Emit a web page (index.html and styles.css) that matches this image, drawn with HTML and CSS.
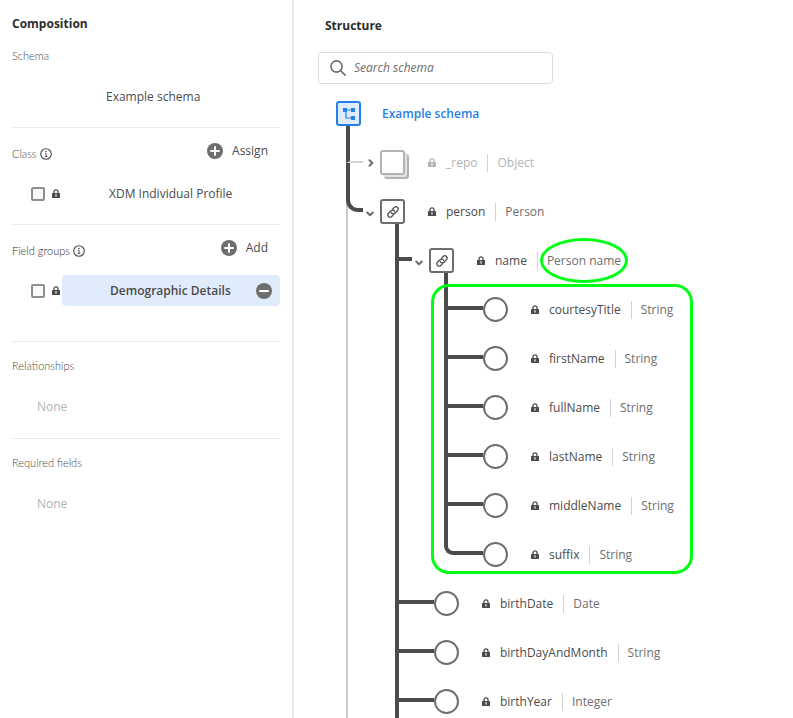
FILE: index.html
```html
<!DOCTYPE html>
<html lang="en">
<head>
<meta charset="utf-8">
<title>Example schema</title>
<link rel="stylesheet" href="styles.css">
</head>
<body>
<svg class="sprite" aria-hidden="true">
  <symbol id="lock" viewBox="0 0 8 9">
    <path d="M2 4.500V2.800a2 2 0 0 1 4 0v1.700" fill="none" stroke="currentColor" stroke-width="1.300"/>
    <path fill-rule="evenodd" fill="currentColor" d="M.6 4h6.800a.6.6 0 0 1 .6.6v3.800a.6.6 0 0 1-.6.6H.6a.6.6 0 0 1-.6-.6V4.600a.6.6 0 0 1 .6-.6zM4 5.200a.8.8 0 0 0-.4 1.500v1h.8v-1A.8.8 0 0 0 4 5.200z"/>
  </symbol>
  <symbol id="info" viewBox="0 0 12 12">
    <circle cx="6" cy="6" r="5.300" fill="none" stroke="currentColor" stroke-width="1.100"/>
    <circle cx="6" cy="3.600" r=".8" fill="currentColor"/>
    <path d="M4.900 5.500h1.200V8.500M4.700 8.500h2.700" fill="none" stroke="currentColor" stroke-width=".9"/>
  </symbol>
  <symbol id="plus" viewBox="0 0 16 16">
    <circle cx="8" cy="8" r="8" fill="currentColor"/>
    <path d="M8 4v8M4 8h8" stroke="#fff" stroke-width="2" stroke-linecap="round"/>
  </symbol>
  <symbol id="minus" viewBox="0 0 16 16">
    <circle cx="8" cy="8" r="8" fill="currentColor"/>
    <path d="M4 8h8" stroke="#fff" stroke-width="2" stroke-linecap="round"/>
  </symbol>
  <symbol id="link" viewBox="0 0 14 14">
    <g transform="rotate(-45 7 7)" fill="none" stroke="currentColor" stroke-width="1.200" stroke-linecap="round">
      <path d="M5.500 9.300H3a2.300 2.300 0 0 1 0-4.600h3.500a2.300 2.300 0 0 1 2.100 3.200"/>
      <path d="M8.500 4.700H11a2.300 2.300 0 0 1 0 4.600H7.500a2.300 2.300 0 0 1-2.100-3.200"/>
    </g>
  </symbol>
  <symbol id="chevron" viewBox="0 0 8 8">
    <path d="M1.200 2.500 4 5.300l2.800-2.800" fill="none" stroke="currentColor" stroke-width="2" stroke-linecap="round" stroke-linejoin="round"/>
  </symbol>
</svg>
<div class="app">
  <aside class="composition">
    <h2>Composition</h2>
    <section class="first">
      <h3>Schema</h3>
      <p class="schema-name">Example schema</p>
    </section>
    <section>
      <header>
        <h3>Class <svg class="info"><use href="#info"/></svg></h3>
        <button type="button" class="action"><svg class="disc"><use href="#plus"/></svg>Assign</button>
      </header>
      <div class="item">
        <input type="checkbox" id="class-profile">
        <svg class="lock"><use href="#lock"/></svg>
        <label for="class-profile" class="name">XDM Individual Profile</label>
      </div>
    </section>
    <section class="groups">
      <header>
        <h3 class="strong">Field groups <svg class="info"><use href="#info"/></svg></h3>
        <button type="button" class="action"><svg class="disc"><use href="#plus"/></svg>Add</button>
      </header>
      <div class="item">
        <input type="checkbox" id="group-demo">
        <svg class="lock"><use href="#lock"/></svg>
        <div class="name selected">
          <label for="group-demo">Demographic Details</label>
          <button type="button" class="remove" aria-label="Remove"><svg class="disc"><use href="#minus"/></svg></button>
        </div>
      </div>
    </section>
    <section class="plain">
      <h3>Relationships</h3>
      <p class="none">None</p>
    </section>
    <section class="plain">
      <h3>Required fields</h3>
      <p class="none">None</p>
    </section>
  </aside>
  <main class="structure">
    <h2>Structure</h2>
    <div class="search">
      <svg viewBox="0 0 16 16"><g fill="none" stroke="currentColor" stroke-width="1.600" stroke-linecap="round"><circle cx="6.500" cy="6.500" r="5.600"/><path d="m10.700 10.700 4.400 4.400"/></g></svg>
      <input type="search" placeholder="Search schema" aria-label="Search schema">
    </div>
    <div class="tree">
      <div class="row root">
        <span class="box"><svg viewBox="0 0 14 14"><g fill="currentColor"><rect x="1" y="1" width="4" height="4"/><rect x="9" y="1" width="4" height="4"/><rect x="9" y="9" width="4" height="4"/></g><path d="M3 3h7M4 3v8h6" fill="none" stroke="currentColor" stroke-width="1.200"/></svg></span>
        <a href="#schema">Example schema</a>
      </div>
      <ul class="top">
        <li class="object muted">
          <div class="rail"><i class="elbow"></i></div>
          <div class="twisty closed"><svg><use href="#chevron"/></svg></div>
          <div class="node"><div class="row"><span class="stack"></span><svg class="lock"><use href="#lock"/></svg><span class="field">_repo</span><span class="type">Object</span></div></div>
        </li>
        <li class="object open">
          <div class="rail"><i class="elbow"></i></div>
          <div class="twisty"><svg><use href="#chevron"/></svg></div>
          <div class="node">
            <div class="row"><span class="box"><svg><use href="#link"/></svg></span><svg class="lock"><use href="#lock"/></svg><span class="field">person</span><span class="type">Person</span></div>
            <ul>
              <li class="object">
                <div class="rail"><i class="elbow"></i></div>
                <div class="twisty"><svg><use href="#chevron"/></svg></div>
                <div class="node">
                  <div class="row"><span class="box"><svg><use href="#link"/></svg></span><svg class="lock"><use href="#lock"/></svg><span class="field">name</span><span class="type"><span class="ringed">Person name</span></span></div>
                  <ul class="framed">
                    <li><div class="rail"><i class="elbow"></i></div><div class="row"><span class="dot"></span><svg class="lock"><use href="#lock"/></svg><span class="field">courtesyTitle</span><span class="type">String</span></div></li>
                    <li><div class="rail"><i class="elbow"></i></div><div class="row"><span class="dot"></span><svg class="lock"><use href="#lock"/></svg><span class="field">firstName</span><span class="type">String</span></div></li>
                    <li><div class="rail"><i class="elbow"></i></div><div class="row"><span class="dot"></span><svg class="lock"><use href="#lock"/></svg><span class="field">fullName</span><span class="type">String</span></div></li>
                    <li><div class="rail"><i class="elbow"></i></div><div class="row"><span class="dot"></span><svg class="lock"><use href="#lock"/></svg><span class="field">lastName</span><span class="type">String</span></div></li>
                    <li><div class="rail"><i class="elbow"></i></div><div class="row"><span class="dot"></span><svg class="lock"><use href="#lock"/></svg><span class="field">middleName</span><span class="type">String</span></div></li>
                    <li class="last"><div class="rail"><i class="elbow"></i></div><div class="row"><span class="dot"></span><svg class="lock"><use href="#lock"/></svg><span class="field">suffix</span><span class="type">String</span></div></li>
                  </ul>
                </div>
              </li>
              <li><div class="rail"><i class="elbow"></i></div><div class="row"><span class="dot"></span><svg class="lock"><use href="#lock"/></svg><span class="field">birthDate</span><span class="type">Date</span></div></li>
              <li><div class="rail"><i class="elbow"></i></div><div class="row"><span class="dot"></span><svg class="lock"><use href="#lock"/></svg><span class="field">birthDayAndMonth</span><span class="type">String</span></div></li>
              <li><div class="rail"><i class="elbow"></i></div><div class="row"><span class="dot"></span><svg class="lock"><use href="#lock"/></svg><span class="field">birthYear</span><span class="type">Integer</span></div></li>
            </ul>
          </div>
        </li>
      </ul>
    </div>
  </main>
</div>
</body>
</html>
```
FILE: styles.css
```css
:root {
  --ink: #4b4b4b;
  --mid: #6e6e6e;
  --line: #eaeaea;
  --blue: #2680eb;
  --mark: #00ff14;
}

*, *::before, *::after { box-sizing: border-box; }

body {
  margin: 0;
  font: 12px/16px "Open Sans", "Noto Sans", sans-serif;
  color: var(--ink);
  background: #fff;
}

h2, h3, p, ul { margin: 0; padding: 0; }
ul { list-style: none; }
svg { display: block; flex: none; }
button, input { font: inherit; color: inherit; }
button { border: 0; padding: 0; background: none; }

.sprite { position: absolute; width: 0; height: 0; }

.app {
  display: grid;
  grid-template-columns: 294px 1fr;
  height: 100vh;
  overflow: hidden;
}

h2 {
  font-size: 12px;
  line-height: 16px;
  font-weight: 700;
  color: #2c2c2c;
}

/* Composition panel */
.composition {
  padding: 16px 12px;
  border-right: 2px solid var(--line);
}

.composition section {
  height: 97px;
  padding-top: 11px;
  border-top: 1px solid var(--line);
}

.composition .first {
  height: 95px;
  padding-top: 16px;
  border: 0;
}

.composition .groups { height: 117px; }
.composition .plain { padding-top: 16px; }

h3 {
  display: flex;
  align-items: center;
  gap: 3px;
  font: 300 11px/16px Lato, sans-serif;
  color: var(--ink);
}

h3.strong { color: #2c2c2c; }

.info { width: 12px; height: 12px; color: var(--ink); }

header {
  display: flex;
  justify-content: space-between;
  padding-right: 12px;
}

header h3 { padding-top: 6px; }

.action {
  display: flex;
  align-items: center;
  gap: 9px;
  height: 24px;
}

.disc { width: 16px; height: 16px; color: var(--mid); }

.schema-name { padding: 25px 0 0 94px; }

.item {
  display: flex;
  align-items: center;
  padding: 15px 0 0 19px;
}

.item input {
  appearance: none;
  width: 14px;
  height: 14px;
  margin: 0 7px 0 0;
  border: 2px solid #8e8e8e;
  border-radius: 2px;
  background: #fafafa;
}

.lock { width: 8px; height: 9px; color: var(--ink); }

.name {
  display: flex;
  align-items: center;
  flex: 1;
  height: 31px;
  margin-left: 2px;
  padding-left: 47px;
}

.selected {
  justify-content: space-between;
  padding: 0 8px 0 48px;
  border-radius: 4px;
  background: #e0ebfc;
  font-weight: 600;
}

.none { padding: 25px 0 0 25px; color: #b3b3b3; }

/* Structure panel */
.structure { padding: 18px 24px 0; overflow: hidden; }
.structure h2 { padding-left: 7px; }

.search {
  display: flex;
  align-items: center;
  gap: 8px;
  width: 235px;
  height: 32px;
  margin-top: 18px;
  padding: 0 11px;
  border: 1px solid #dcdcdc;
  border-radius: 4px;
  color: var(--mid);
}

.search svg { width: 16px; height: 16px; }

.search input {
  flex: 1;
  min-width: 0;
  padding: 0;
  border: 0;
  outline: 0;
  background: none;
}

.search input::placeholder { font-style: italic; color: var(--mid); opacity: 1; }

.tree { padding: 5px 0 0 18px; }

.row {
  display: flex;
  align-items: center;
  height: 49px;
  white-space: nowrap;
}

.box {
  display: grid;
  place-items: center;
  width: 25px;
  height: 25px;
  border: 2px solid var(--mid);
  border-radius: 3px;
  background: #fff;
  color: var(--ink);
}

.box svg { width: 14px; height: 14px; }

.root .box { border-color: var(--blue); background: #deebff; color: var(--blue); }

.root a {
  margin-left: 21px;
  font-weight: 600;
  color: var(--blue);
  text-decoration: none;
}

.row .lock { margin: 0 10px 0 23px; }
.field { font-weight: 500; }

.type {
  margin-left: 10px;
  padding: 1px 0 1px 9px;
  border-left: 1px solid #d3d3d3;
  color: var(--mid);
}

.muted .field, .muted .type, .muted .lock { color: #b3b3b3; }

.dot {
  width: 25px;
  height: 25px;
  border: 2px solid var(--mid);
  border-radius: 50%;
}

.stack {
  width: 25px;
  height: 25px;
  border: 2px solid #b3b3b3;
  border-radius: 3px;
  background: #fff;
  box-shadow: 2px 2px 0 #e1e1e1, 4px 4px 0 #b3b3b3;
}

/* Connector rails: an elbow into the row, then a tail to the next sibling */
li { display: flex; }
.tree ul { margin: -12px 0 0 15px; }
.tree .top { margin-left: 10px; }

.rail {
  display: flex;
  flex-direction: column;
  width: 39px;
}

.object > .rail { width: 17px; }

.elbow {
  height: 25px;
  border-left: 4px solid var(--ink);
  border-bottom: 4px solid var(--ink);
}

.rail::after { content: ""; flex: 1; border-left: 4px solid var(--ink); }
.last > .rail > .elbow { border-bottom-left-radius: 9px; }
.last > .rail::after { display: none; }

li:first-child > .rail > .elbow { height: 37px; }
li:first-child > .row, li:first-child > .node, li:first-child > .twisty { margin-top: 12px; }

.muted > .rail > .elbow { border-bottom: 2px solid #d3d3d3; }
.open > .rail { background: linear-gradient(#c8c8c8, #c8c8c8) 0 0 / 2px 100% no-repeat; }
.open > .rail > .elbow { border-bottom-left-radius: 12px; }
.open > .rail::after { display: none; }

.twisty {
  width: 17px;
  padding: 23px 0 0 3px;
  color: var(--mid);
}

.twisty svg { width: 8px; height: 8px; }
.closed { padding: 21px 0 0 4px; }
.closed svg { transform: rotate(-90deg); }

/* Highlight marks laid over the tree */
.ringed, .framed { position: relative; }

.ringed::after {
  content: "";
  position: absolute;
  inset: -14px -7px;
  border: 3px solid var(--mark);
  border-radius: 50%;
}

.framed::after {
  content: "";
  position: absolute;
  top: 11px;
  bottom: 5px;
  left: -13px;
  width: 262px;
  border: 3px solid var(--mark);
  border-radius: 18px;
}
```
